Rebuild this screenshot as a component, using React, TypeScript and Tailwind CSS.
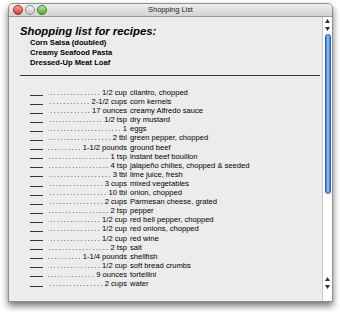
import React from "react";

const items: [string, string][] = [
  ["1/2 cup", "cilantro, chopped"],
  ["2-1/2 cups", "corn kernels"],
  ["17 ounces", "creamy Alfredo sauce"],
  ["1/2 tsp", "dry mustard"],
  ["1", "eggs"],
  ["2 tbl", "green pepper, chopped"],
  ["1-1/2 pounds", "ground beef"],
  ["1 tsp", "instant beef bouillon"],
  ["4 tsp", "jalapeño chilies, chopped & seeded"],
  ["3 tbl", "lime juice, fresh"],
  ["3 cups", "mixed vegetables"],
  ["10 tbl", "onion, chopped"],
  ["2 cups", "Parmesan cheese, grated"],
  ["2 tsp", "pepper"],
  ["1/2 cup", "red bell pepper, chopped"],
  ["1/2 cup", "red onions, chopped"],
  ["1/2 cup", "red wine"],
  ["2 tsp", "salt"],
  ["1-1/4 pounds", "shellfish"],
  ["1/2 cup", "soft bread crumbs"],
  ["9 ounces", "tortellini"],
  ["2 cups", "water"],
];

const DOTS = ".".repeat(30);

export default function App() {
  return (
    <div
      className="w-[340px] h-[312px] bg-white overflow-hidden pt-[3px] pl-[8px]"
      style={{ fontFamily: "'Liberation Sans', Arial, sans-serif" }}
    >
      <div className="w-[325px] h-[299px] flex flex-col rounded-t-[5px] border border-[#8e8e8e] shadow-[0_4px_7px_rgba(0,0,0,0.55)] bg-[#ececec] overflow-hidden">
        {/* title bar */}
        <div className="h-[13px] shrink-0 flex items-center relative bg-gradient-to-b from-[#eeeeee] to-[#d2d2d2] border-b border-[#9a9a9a]">
          <div className="flex gap-[2px] pl-[4px]">
            <span className="w-[10px] h-[10px] rounded-full bg-gradient-to-b from-[#f5a0a0] to-[#d33a3a] border border-[#8e2a2a]" />
            <span className="w-[10px] h-[10px] rounded-full bg-gradient-to-b from-[#f5f5f5] to-[#c7c7c7] border border-[#8f8f8f]" />
            <span className="w-[10px] h-[10px] rounded-full bg-gradient-to-b from-[#b6ef9c] to-[#4ca632] border border-[#3a7a2a]" />
          </div>
          <div className="absolute inset-0 flex items-center justify-center text-[7.4px] text-[#222]">
            Shopping List
          </div>
        </div>
        {/* body */}
        <div className="flex flex-1 min-h-0">
          <div className="flex-1 pl-[11px] pr-[2px] text-black">
            <div className="pt-[8px] text-[11.3px] font-bold italic leading-[13px]">
              Shopping list for recipes:
            </div>
            <div className="pl-[10px] text-[7.6px] font-bold leading-[10px]">
              <div>Corn Salsa (doubled)</div>
              <div>Creamy Seafood Pasta</div>
              <div>Dressed-Up Meat Loaf</div>
            </div>
            <div className="mt-[7px] h-[1px] bg-[#333]" />
            <div className="pt-[12px] pl-[10px] text-[7.6px]">
              {items.map(([amt, desc], i) => (
                <div key={i} className="flex h-[9.1px] leading-[9.1px] whitespace-nowrap">
                  <span className="w-[13px] h-[1px] bg-[#333] self-end mb-[1.5px] shrink-0" />
                  <span className="w-[79px] ml-[5px] flex justify-end overflow-hidden shrink-0">
                    <span className="tracking-[1.3px] shrink-0 text-[#222]">{DOTS}</span>
                    <span className="shrink-0 pl-[1px]">{amt}</span>
                  </span>
                  <span className="ml-[3px]">{desc}</span>
                </div>
              ))}
            </div>
          </div>
          {/* scrollbar */}
          <div className="w-[10px] shrink-0 bg-white border-l border-[#c8c8c8] flex flex-col items-center">
            <div className="h-[8px] flex items-center justify-center">
              <svg width="5" height="4" viewBox="0 0 5 4"><path d="M2.5 0L5 4H0z" fill="#333" /></svg>
            </div>
            <div className="h-[8px] flex items-center justify-center">
              <svg width="5" height="4" viewBox="0 0 5 4"><path d="M0 0h5L2.5 4z" fill="#333" /></svg>
            </div>
            <div className="mt-[1px] w-[6px] h-[160px] rounded-full bg-gradient-to-r from-[#3a78d8] via-[#9cc8f8] to-[#3a78d8] border border-[#2e5fb0]" />
            <div className="flex-1" />
            <div className="h-[8px] flex items-center justify-center">
              <svg width="5" height="4" viewBox="0 0 5 4"><path d="M2.5 0L5 4H0z" fill="#333" /></svg>
            </div>
            <div className="h-[8px] flex items-center justify-center">
              <svg width="5" height="4" viewBox="0 0 5 4"><path d="M0 0h5L2.5 4z" fill="#333" /></svg>
            </div>
            <div className="h-[10px]" />
          </div>
        </div>
      </div>
    </div>
  );
}
